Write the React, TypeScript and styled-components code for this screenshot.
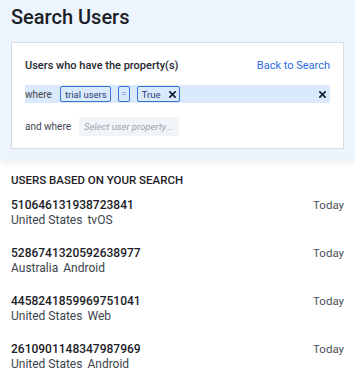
import React from "react";
import styled, { createGlobalStyle } from "styled-components";

const GlobalStyle = createGlobalStyle`
  html, body {
    margin: 0;
    padding: 0;
    background: #fff;
  }
  body {
    font-family: Roboto, "Liberation Sans", sans-serif;
    color: #1d2329;
  }
`;

const Page = styled.div`
  width: 355px;
  height: 389px;
  overflow: hidden;
  background: #fff;
`;

const Header = styled.header`
  background: #ecf4fe;
  padding: 3px 11px 10px;
  box-shadow: 0 3px 8px rgba(30, 50, 80, 0.1);
  position: relative;
`;

const Title = styled.h1`
  margin: 0 0 10px;
  font-size: 20px;
  line-height: 29px;
  font-weight: 500;
  color: #1b2026;
`;

const Card = styled.div`
  background: #fff;
  border: 1px solid #d7dde3;
  padding: 13px 13px 13px;
  display: flex;
  flex-direction: column;
`;

const CardTop = styled.div`
  display: flex;
  justify-content: space-between;
  align-items: center;
  height: 18px;
  margin-bottom: 11px;
`;

const CardLabel = styled.span`
  font-size: 11px;
  font-weight: 500;
  color: #24292f;
`;

const BackLink = styled.a`
  font-size: 11px;
  color: #2d6cdf;
  text-decoration: none;
  cursor: pointer;
`;

const FilterRow = styled.div<{ $active?: boolean }>`
  display: flex;
  align-items: center;
  gap: 7px;
  height: 18px;
  padding-right: 4px;
  background: ${(p) => (p.$active ? "#dbe9fc" : "transparent")};
  margin-bottom: ${(p) => (p.$active ? "14px" : "0")};
`;

const Keyword = styled.span`
  font-size: 10px;
  color: #3d4650;
  white-space: nowrap;
  margin-right: 1px;
`;

const Chip = styled.span`
  display: inline-flex;
  align-items: center;
  gap: 8px;
  height: 16px;
  padding: 0 3px 0 4px;
  box-sizing: border-box;
  border: 1px solid #3a72d8;
  border-radius: 2px;
  font-size: 9.5px;
  color: #1f3f73;
  background: #dbe9fc;
  white-space: nowrap;
`;

const EqChip = styled(Chip)`
  justify-content: center;
  width: 12px;
  color: #8eb0e6;
  font-size: 9px;
  font-weight: 700;
  padding: 0;
`;

const Spacer = styled.div`
  flex: 1;
`;

const PropertyInput = styled.div`
  display: flex;
  align-items: center;
  height: 19px;
  width: 100px;
  box-sizing: border-box;
  padding: 0 5px;
  background: #f1f5f9;
  font-size: 9.5px;
  font-style: italic;
  color: #9aa4ae;
  white-space: nowrap;
  overflow: hidden;
`;

const Results = styled.section`
  padding: 14px 11px 0;
`;

const SectionTitle = styled.h2`
  margin: 0 0 11px;
  font-size: 11.5px;
  line-height: 14px;
  font-weight: 500;
  color: #1b2026;
`;

const UserList = styled.ul`
  list-style: none;
  margin: 0;
  padding: 0;
  display: flex;
  flex-direction: column;
  gap: 19px;
`;

const UserRow = styled.li`
  display: flex;
  justify-content: space-between;
  align-items: flex-start;
`;

const UserInfo = styled.div`
  display: flex;
  flex-direction: column;
`;

const UserId = styled.span`
  font-size: 12px;
  line-height: 15px;
  font-weight: 500;
  color: #1b2026;
`;

const UserMeta = styled.span`
  display: flex;
  gap: 5px;
  font-size: 12px;
  line-height: 14px;
  color: #3b434c;
`;

const When = styled.span`
  font-size: 11.5px;
  line-height: 15px;
  color: #4a525a;
`;

const XIcon = ({ size = 8 }: { size?: number }) => (
  <svg width={size} height={size} viewBox="0 0 8 8">
    <path d="M1 1 L7 7 M7 1 L1 7" stroke="#16243a" strokeWidth="2" strokeLinecap="square" />
  </svg>
);

const users = [
  { id: "510646131938723841", country: "United States", platform: "tvOS" },
  { id: "5286741320592638977", country: "Australia", platform: "Android" },
  { id: "4458241859969751041", country: "United States", platform: "Web" },
  { id: "2610901148347987969", country: "United States", platform: "Android" },
];

export default function App() {
  return (
    <Page>
      <GlobalStyle />
      <Header>
        <Title>Search Users</Title>
        <Card>
          <CardTop>
            <CardLabel>Users who have the property(s)</CardLabel>
            <BackLink>Back to Search</BackLink>
          </CardTop>
          <FilterRow $active>
            <Keyword>where</Keyword>
            <Chip>trial users</Chip>
            <EqChip>=</EqChip>
            <Chip>
              True
              <XIcon size={7} />
            </Chip>
            <Spacer />
            <XIcon size={7} />
          </FilterRow>
          <FilterRow>
            <Keyword>and where</Keyword>
            <PropertyInput>Select user property...</PropertyInput>
          </FilterRow>
        </Card>
      </Header>
      <Results>
        <SectionTitle>USERS BASED ON YOUR SEARCH</SectionTitle>
        <UserList>
          {users.map((u) => (
            <UserRow key={u.id}>
              <UserInfo>
                <UserId>{u.id}</UserId>
                <UserMeta>
                  <span>{u.country}</span>
                  <span>{u.platform}</span>
                </UserMeta>
              </UserInfo>
              <When>Today</When>
            </UserRow>
          ))}
        </UserList>
      </Results>
    </Page>
  );
}
